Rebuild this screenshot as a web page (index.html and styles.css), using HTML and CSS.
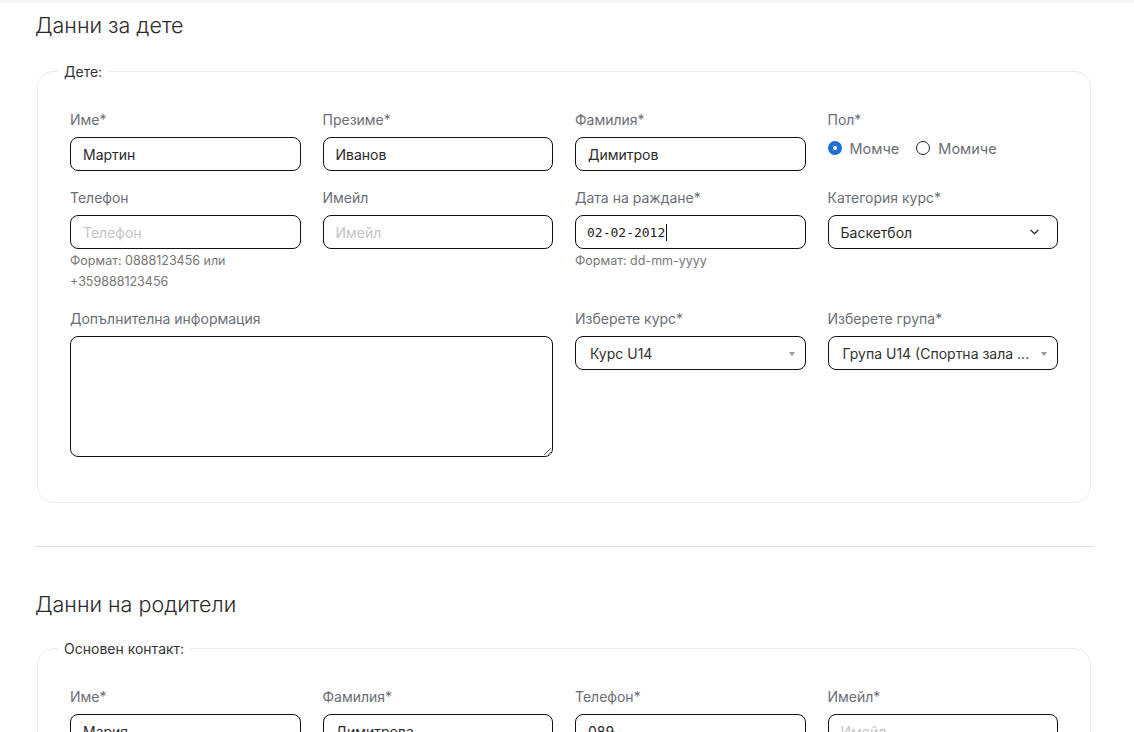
FILE: index.html
```html
<!DOCTYPE html>
<html lang="bg">
<head>
<meta charset="utf-8">
<title>Данни за дете</title>
<link rel="stylesheet" href="styles.css">
</head>
<body>
<div class="topbar"></div>
<main class="page">
  <h2 class="section-title">Данни за дете</h2>
  <fieldset class="group">
    <legend>Дете:</legend>
    <div class="grid">
      <div class="field">
        <label>Име*</label>
        <input class="input" type="text" value="Мартин">
      </div>
      <div class="field">
        <label>Презиме*</label>
        <input class="input" type="text" value="Иванов">
      </div>
      <div class="field">
        <label>Фамилия*</label>
        <input class="input" type="text" value="Димитров">
      </div>
      <div class="field">
        <label>Пол*</label>
        <div class="radios">
          <span class="radio"><span class="dot checked"></span>Момче</span>
          <span class="radio"><span class="dot"></span>Момиче</span>
        </div>
      </div>

      <div class="field">
        <label>Телефон</label>
        <input class="input" type="text" placeholder="Телефон">
        <div class="help">Формат: 0888123456 или<br>+359888123456</div>
      </div>
      <div class="field">
        <label>Имейл</label>
        <input class="input" type="text" placeholder="Имейл">
      </div>
      <div class="field">
        <label>Дата на раждане*</label>
        <div class="input mono"><span>02-02-2012</span><span class="caret"></span></div>
        <div class="help">Формат: dd-mm-yyyy</div>
      </div>
      <div class="field">
        <label>Категория курс*</label>
        <div class="input select">
          <span>Баскетбол</span>
          <svg class="chev" width="9" height="6" viewBox="0 0 9 6"><path d="M1 1.2l3.5 3.5 3.5-3.5" fill="none" stroke="#333" stroke-width="1.3" stroke-linecap="round" stroke-linejoin="round"/></svg>
        </div>
      </div>

      <div class="field span2">
        <label>Допълнителна информация</label>
        <textarea class="textarea"></textarea>
      </div>
      <div class="field">
        <label>Изберете курс*</label>
        <div class="input select2">
          <span class="s2text">Курс U14</span>
          <span class="tri"></span>
        </div>
      </div>
      <div class="field">
        <label>Изберете група*</label>
        <div class="input select2">
          <span class="s2text">Група U14 (Спортна зала ...</span>
          <span class="tri"></span>
        </div>
      </div>
    </div>
  </fieldset>

  <hr class="divider">

  <h2 class="section-title">Данни на родители</h2>
  <fieldset class="group">
    <legend>Основен контакт:</legend>
    <div class="grid">
      <div class="field">
        <label>Име*</label>
        <input class="input" type="text" value="Мария">
      </div>
      <div class="field">
        <label>Фамилия*</label>
        <input class="input" type="text" value="Димитрова">
      </div>
      <div class="field">
        <label>Телефон*</label>
        <input class="input" type="text" value="089">
      </div>
      <div class="field">
        <label>Имейл*</label>
        <input class="input" type="text" placeholder="Имейл">
      </div>
    </div>
  </fieldset>
</main>
</body>
</html>
```
FILE: styles.css
```css
* { box-sizing: border-box; }
html, body { margin: 0; padding: 0; background: #fff; }
body {
  font-family: Inter, "Noto Sans", "Liberation Sans", sans-serif;
  color: #222;
  overflow: hidden;
}
.topbar { height: 3px; background: #f5f5f5; }
.page { padding: 0 40px 0 35px; }
.section-title {
  font-size: 21.5px;
  font-weight: 300;
  line-height: 26px;
  color: #2b2b2b;
  margin: 9px 0 0 0;
}
.group {
  margin: 25px 3px 0 2px;
  border: 1px solid #ececec;
  border-radius: 16px;
  padding: 31px 32px 45px 32px;
  min-width: 0;
}
.group legend {
  font-size: 14px;
  line-height: 17px;
  color: #333;
  padding: 0 6px;
  margin-left: -12px;
}
.grid {
  display: grid;
  grid-template-columns: repeat(4, 1fr);
  column-gap: 22px;
  row-gap: 18px;
  align-items: start;
}
.span2 { grid-column: span 2; }
.field { display: flex; flex-direction: column; min-width: 0; }
.field label {
  font-size: 14px;
  line-height: 18px;
  color: #6b6e75;
  margin-bottom: 8px;
}
.input {
  height: 34px;
  border: 1px solid #111;
  border-radius: 8px;
  padding: 0 12px;
  font-family: Inter, "Noto Sans", "Liberation Sans", sans-serif;
  font-size: 14px;
  color: #2a2a2a;
  background: #fff;
  outline: none;
  width: 100%;
  display: flex;
  align-items: center;
}
.input::placeholder { color: #c4c4c4; }
.mono {
  font-family: "DejaVu Sans Mono", "Liberation Mono", monospace;
  font-size: 13px;
  color: #222;
  padding-left: 11px;
}
.caret {
  display: inline-block;
  width: 1px;
  height: 17px;
  background: #111;
  margin-left: 1px;
}
.select { justify-content: space-between; padding-right: 18px; }
.chev { flex: none; }
.select2 { padding: 0 10px 0 14px; justify-content: space-between; gap: 8px; color: #333; }
.s2text {
  white-space: nowrap;
  overflow: hidden;
  min-width: 0;
  flex: 1;
}
.tri {
  flex: none;
  width: 0; height: 0;
  border-left: 3.5px solid transparent;
  border-right: 3.5px solid transparent;
  border-top: 4px solid #999;
  margin-top: 1px;
}
.help {
  font-size: 12.5px;
  line-height: 21px;
  color: #777;
  margin-top: 1px;
}
.radios {
  display: flex;
  align-items: center;
  gap: 17px;
  height: 20px;
  margin-top: 1px;
}
.radio {
  display: flex;
  align-items: center;
  gap: 8px;
  font-size: 14.5px;
  color: #6b6e75;
}
.dot {
  width: 14px; height: 14px;
  border-radius: 50%;
  border: 1.5px solid #222;
  background: #fff;
  display: inline-block;
  flex: none;
}
.dot.checked {
  border: 4px solid #1a6fd9;
  background: #fff;
  box-shadow: 0 0 0 1px #0f5cbf inset;
}
.textarea {
  height: 121px;
  border: 1px solid #111;
  border-radius: 8px;
  resize: vertical;
  font-family: inherit;
  font-size: 14px;
  width: 100%;
  outline: none;
}
.divider {
  border: 0;
  border-top: 1px solid #dedede;
  margin: 43px 0 0 0;
}
.divider + .section-title { margin-top: 44px; }
.divider + .section-title + .group { margin-top: 23px; }
```
